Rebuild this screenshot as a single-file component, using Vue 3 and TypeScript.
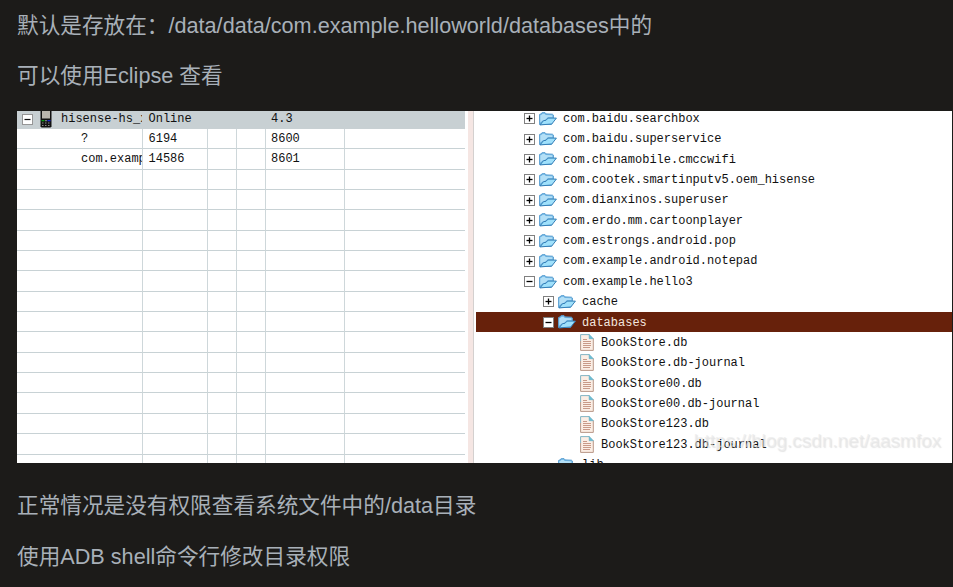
<script setup lang="ts">
interface TreeItem {
  label: string
  depth: number
  kind: 'folder' | 'file'
  state?: 'open' | 'closed' | 'none'
  selected?: boolean
}

const packages: string[] = [
  'com.baidu.searchbox',
  'com.baidu.superservice',
  'com.chinamobile.cmccwifi',
  'com.cootek.smartinputv5.oem_hisense',
  'com.dianxinos.superuser',
  'com.erdo.mm.cartoonplayer',
  'com.estrongs.android.pop',
  'com.example.android.notepad',
]
const files: string[] = [
  'BookStore.db',
  'BookStore.db-journal',
  'BookStore00.db',
  'BookStore00.db-journal',
  'BookStore123.db',
  'BookStore123.db-journal',
]
const tree: TreeItem[] = [
  ...packages.map((label): TreeItem => ({ label, depth: 0, kind: 'folder', state: 'closed' })),
  { label: 'com.example.hello3', depth: 0, kind: 'folder', state: 'open' },
  { label: 'cache', depth: 1, kind: 'folder', state: 'closed' },
  { label: 'databases', depth: 1, kind: 'folder', state: 'open', selected: true },
  ...files.map((label): TreeItem => ({ label, depth: 2, kind: 'file' })),
  { label: 'lib', depth: 1, kind: 'folder', state: 'none' },
]

const processes: string[][] = [
  ['?', '6194', '', '', '8600', ''],
  ['com.examp', '14586', '', '', '8601', ''],
  ...Array.from({ length: 15 }, () => ['', '', '', '', '', '']),
]
</script>

<template>
  <article class="post">
    <p>默认是存放在：/data/data/com.example.helloworld/databases中的</p>
    <p class="second">可以使用Eclipse 查看</p>
    <figure class="shot">
      <section class="devices">
        <div class="line head">
          <div class="cell device">
            <svg class="toggle" viewBox="0 0 11 11">
              <rect x=".5" y=".5" width="10" height="10" fill="#fff" stroke="#969696" />
              <path d="M2.5 5.5h6" stroke="#111" stroke-width="1.2" />
            </svg>
            <svg class="phone" viewBox="0 0 12 17">
              <path d="M.5 0h11v15.5l-1 1h-9l-1-1z" fill="#111" />
              <path d="M2 0h8v7.5H2z" fill="#b9b5ad" />
              <path d="M1.5 9h3v1.3h-3z" fill="#0b9d16" />
              <path d="M7.5 9h3v1.3h-3z" fill="#1624d5" />
              <path d="M5 9h2v1.3H5z" fill="#777" />
              <path d="M2 12h8M2 14.5h8" stroke="#aaa" stroke-width=".8" stroke-dasharray="1.5 1.5" />
            </svg>
            <span class="name">hisense-hs_x</span>
          </div>
          <div class="cell">Online</div>
          <div class="cell" />
          <div class="cell" />
          <div class="cell">4.3</div>
          <div class="cell" />
        </div>
        <div v-for="(row, r) in processes" :key="r" class="line">
          <div v-for="(value, c) in row" :key="c" class="cell">{{ value }}</div>
        </div>
      </section>
      <div class="sash" />
      <section class="tree">
        <div
          v-for="item in tree"
          :key="item.label"
          class="node"
          :class="['depth-' + item.depth, { selected: item.selected }]"
        >
          <svg v-if="item.kind === 'folder'" class="toggle" viewBox="0 0 11 11">
            <template v-if="item.state !== 'none'">
              <rect x=".5" y=".5" width="10" height="10" fill="#fff" stroke="#808080" />
              <path d="M2.5 5.5h6" stroke="#000" stroke-width="1.3" />
              <path v-if="item.state === 'closed'" d="M5.5 2.5v6" stroke="#000" stroke-width="1.3" />
            </template>
          </svg>
          <svg v-if="item.kind === 'folder'" class="folder" viewBox="0 0 18 14">
            <path
              d="M.6 12.6V2.4L2 2l.9-1.2L6 .6l1 1.3 6.4.3 1 .8v3.4l-2 6z"
              fill="#6fb6e4"
              stroke="#5a9fd2"
              stroke-linejoin="round"
            />
            <path d="M1.3 10.6V3.2l1.4-.5.9-1h2l1 1.3 6.8.3v1.9L8.6 5.3 6.4 7.8l-2.8.8z" fill="#b3dff6" />
            <path
              d="M1 12.9l3.5-4.2 2.6-.5 2-2.1h8.3l-4.6 5.9z"
              fill="#9fe0fb"
              stroke="#347eb6"
              stroke-linejoin="round"
            />
          </svg>
          <svg v-else class="file" viewBox="0 0 14 17">
            <path d="M.6.6h8.7l4 4v11.8H.6z" fill="#fbeee5" />
            <path d="M.6 7v9.4h12.7V4.6" fill="none" stroke="#b89888" />
            <path d="M.6 7V.6h8.7" fill="none" stroke="#83b4c4" />
            <path d="M9.2.4l4.2 4.3H9.2z" fill="#69bfd8" stroke="#60a8be" stroke-width=".6" />
            <path d="M3 5.5h4M3 7.5h8M3 9.5h8M3 11.5h8M3 13.5h7" stroke="#c89a88" />
          </svg>
          <span class="label">{{ item.label }}</span>
        </div>
      </section>
      <figcaption class="mark">https://blog.csdn.net/aasmfox</figcaption>
    </figure>
    <p>正常情况是没有权限查看系统文件中的/data目录</p>
    <p>使用ADB shell命令行修改目录权限</p>
  </article>
</template>

<style>
body {
  background: #1c1b19;
}
</style>

<style scoped>
.post {
  box-sizing: border-box;
  height: 587px;
  overflow: hidden;
  padding: 1px 1px 0 17px;
  color: #a8b0b8;
  font: 21.65px/50.5px "Liberation Sans", "Noto Sans CJK SC", sans-serif;
}
p {
  height: 50.5px;
  margin: 0;
  white-space: nowrap;
}
.second {
  line-height: 47.5px;
}
.shot {
  position: relative;
  display: flex;
  width: 935px;
  height: 352px;
  margin: 9px 0 18px;
  overflow: hidden;
  background: #fff;
  color: #111;
  font: 12px/20px "Liberation Mono", monospace;
}
.devices {
  width: 448px;
  flex: none;
}
.line {
  display: grid;
  grid-template-columns: 126px 65px 29px 28.5px 79.5px 120px;
  height: 20.36px;
}
.cell {
  box-sizing: border-box;
  overflow: hidden;
  padding-left: 5.5px;
  border-right: 1px solid #ced7da;
  border-bottom: 1px solid #c8d2d5;
  line-height: 21px;
  white-space: nowrap;
}
.cell:first-child {
  padding-left: 64px;
}
.cell:last-child {
  border-right: 0;
}
.head {
  height: 17.8px;
  background: #c8d0d3;
}
.head .cell {
  border-color: transparent;
  line-height: 16px;
}
.head .device {
  display: flex;
  align-items: flex-start;
  padding-left: 5px;
}
.toggle {
  width: 11px;
  height: 11px;
  flex: none;
}
.device .toggle {
  margin-top: 2.5px;
}
.phone {
  width: 12px;
  height: 17px;
  flex: none;
  margin: 0 5px 0 7px;
}
.name {
  margin-left: 4px;
}
.sash {
  box-sizing: border-box;
  width: 6px;
  flex: none;
  margin: 0 2px 0 3px;
  background: #f5e6e3;
  border-right: 1.5px solid #d4d0cf;
}
.tree {
  flex: 1;
  margin-top: -2.5px;
}
.node {
  display: flex;
  align-items: center;
  height: 20.36px;
  padding-left: 47.5px;
}
.depth-1 {
  padding-left: 66.5px;
}
.depth-2 {
  padding-left: 103.5px;
}
.selected {
  background: #67210b;
  color: #f4e6df;
}
.folder {
  width: 18px;
  height: 14px;
  flex: none;
  margin: 0 6.5px 0 4px;
}
.file {
  width: 14px;
  height: 17px;
  flex: none;
  margin-right: 7.5px;
}
.label {
  padding-top: 0.5px;
}
.mark {
  position: absolute;
  right: 11px;
  bottom: 8px;
  color: rgba(232, 232, 232, 0.6);
  font: 19px/28px "Liberation Sans", sans-serif;
  text-shadow: 1px 1px 1px rgba(150, 150, 150, 0.25);
}
</style>
